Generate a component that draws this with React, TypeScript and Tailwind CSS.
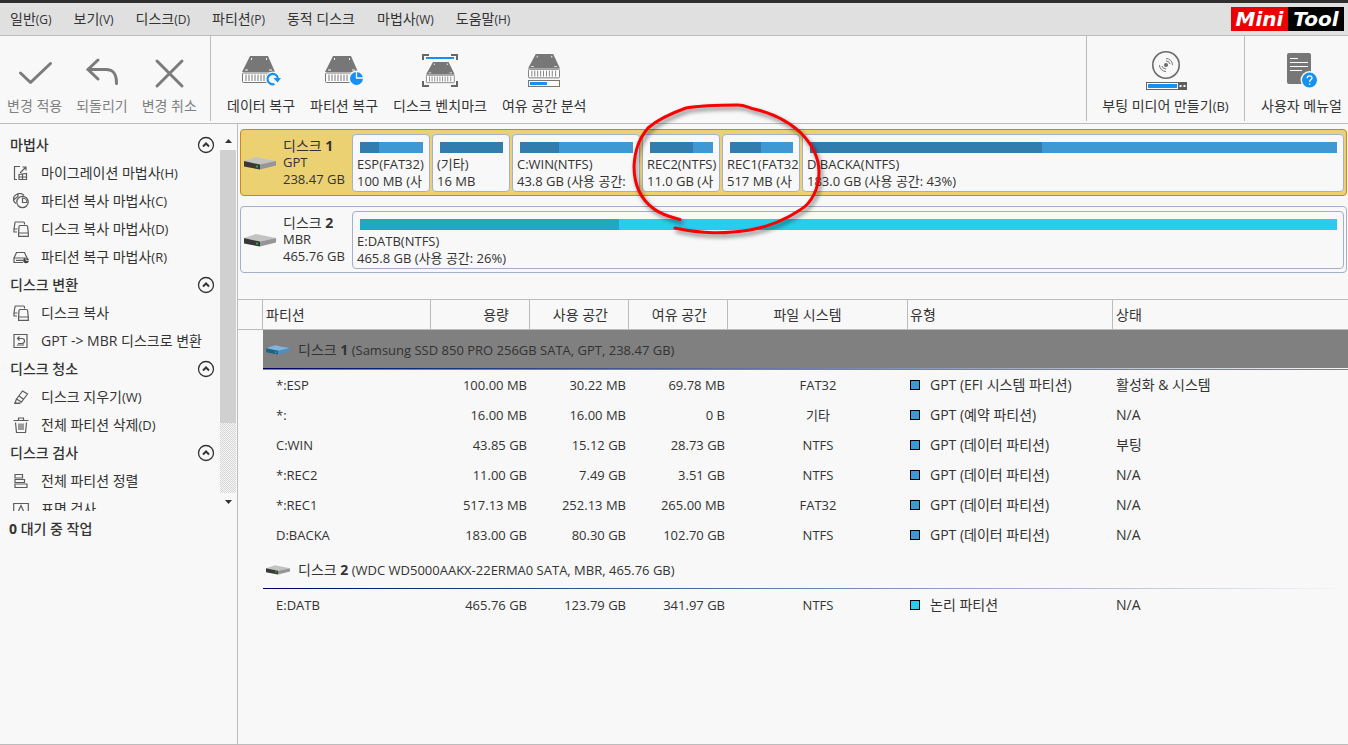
import { useState } from "react";
import type { ReactNode } from "react";

type Partition = {
    name: string;
    size: string;
    used: number;
    box: string;
};

type Row = {
    name: string;
    total: string;
    used: string;
    free: string;
    fs: string;
    kind: string;
    state: string;
};

const menuItems = [
    { name: "일반", hotkey: "(G)" },
    { name: "보기", hotkey: "(V)" },
    { name: "디스크", hotkey: "(D)" },
    { name: "파티션", hotkey: "(P)" },
    { name: "동적 디스크", hotkey: "" },
    { name: "마법사", hotkey: "(W)" },
    { name: "도움말", hotkey: "(H)" },
];

const disk1Parts: Partition[] = [
    { name: "ESP(FAT32)", size: "100 MB (사", used: 30, box: "w-[78px] shrink-0" },
    { name: "(기타)", size: "16 MB", used: 100, box: "w-[78px] shrink-0" },
    { name: "C:WIN(NTFS)", size: "43.8 GB (사용 공간:", used: 34.5, box: "w-32 shrink-0" },
    { name: "REC2(NTFS)", size: "11.0 GB (사", used: 68, box: "w-[78px] shrink-0" },
    { name: "REC1(FAT32", size: "517 MB (사", used: 49, box: "w-[78px] shrink-0" },
    { name: "D:BACKA(NTFS)", size: "183.0 GB (사용 공간: 43%)", used: 44, box: "min-w-0 flex-1" },
];

const disk2Parts: Partition[] = [
    { name: "E:DATB(NTFS)", size: "465.8 GB (사용 공간: 26%)", used: 26.5, box: "min-w-0 flex-1" },
];

const disk1Rows: Row[] = [
    { name: "*:ESP", total: "100.00 MB", used: "30.22 MB", free: "69.78 MB", fs: "FAT32", kind: "GPT (EFI 시스템 파티션)", state: "활성화 & 시스템" },
    { name: "*:", total: "16.00 MB", used: "16.00 MB", free: "0 B", fs: "기타", kind: "GPT (예약 파티션)", state: "N/A" },
    { name: "C:WIN", total: "43.85 GB", used: "15.12 GB", free: "28.73 GB", fs: "NTFS", kind: "GPT (데이터 파티션)", state: "부팅" },
    { name: "*:REC2", total: "11.00 GB", used: "7.49 GB", free: "3.51 GB", fs: "NTFS", kind: "GPT (데이터 파티션)", state: "N/A" },
    { name: "*:REC1", total: "517.13 MB", used: "252.13 MB", free: "265.00 MB", fs: "FAT32", kind: "GPT (데이터 파티션)", state: "N/A" },
    { name: "D:BACKA", total: "183.00 GB", used: "80.30 GB", free: "102.70 GB", fs: "NTFS", kind: "GPT (데이터 파티션)", state: "N/A" },
];

const disk2Rows: Row[] = [
    { name: "E:DATB", total: "465.76 GB", used: "123.79 GB", free: "341.97 GB", fs: "NTFS", kind: "논리 파티션", state: "N/A" },
];

/* ---------- toolbar icons ---------- */

function DriveFront() {
    return (
        <g>
            <path d="M8 0H26L33 16H0Z" fill="#777" />
            <path d="M9 2h1v2H9zM24 2h1v2h-1zM3 13.5h3v1H3zM27 13.5h3v1h-3z" fill="#f8f8f8" />
            <rect x="0.5" y="17" width="32" height="9.5" rx="1" fill="#fff" stroke="#777" />
            <path
                d="M4 18.5v6.5M7 18.5v6.5M10 18.5v6.5M13 18.5v6.5M16 18.5v6.5M19 18.5v6.5M22 18.5v6.5M25 18.5v6.5M28.5 18.5v6.5"
                stroke="#777"
                strokeWidth="1"
            />
        </g>
    );
}

function ApplyIcon() {
    return (
        <svg width="40" height="40" viewBox="0 0 40 40" fill="none" stroke="#7b7b7b" strokeWidth="3" strokeLinecap="round" strokeLinejoin="round">
            <path d="M5.5 23 15.5 32.5 35.5 13.5" />
        </svg>
    );
}

function UndoIcon() {
    return (
        <svg width="40" height="40" viewBox="0 0 40 40" fill="none" stroke="#7b7b7b" strokeWidth="3" strokeLinecap="round">
            <path d="M16 10 6 19.5 16 29M6 19.5H24C31.5 19.5 34.5 24 34.5 33.5" />
        </svg>
    );
}

function DiscardIcon() {
    return (
        <svg width="40" height="40" viewBox="0 0 40 40" fill="none" stroke="#7b7b7b" strokeWidth="3" strokeLinecap="round">
            <path d="M8 11 33 36M33 11 8 36" />
        </svg>
    );
}

function DataRecoveryIcon() {
    return (
        <svg width="40" height="40" viewBox="0 0 40 40" fill="none">
            <g transform="translate(1 6)">
                <DriveFront />
            </g>
            <circle cx="32" cy="29" r="7.5" fill="#f8f8f8" />
            <path d="M33.5 34A5.2 5.2 0 1 1 36.8 28" stroke="#1590f5" strokeWidth="2.2" />
            <path d="M32.5 28H40L36.5 32.5Z" fill="#1590f5" />
        </svg>
    );
}

function PartitionRecoveryIcon() {
    return (
        <svg width="40" height="40" viewBox="0 0 40 40" fill="none">
            <g transform="translate(1 6)">
                <DriveFront />
            </g>
            <circle cx="32.5" cy="28.5" r="8" fill="#f8f8f8" />
            <circle cx="32.5" cy="28.5" r="6.5" fill="#1590f5" />
            <path d="M32.5 21.5V28H39.5" stroke="#f8f8f8" strokeWidth="1.3" />
        </svg>
    );
}

function BenchmarkIcon() {
    return (
        <svg width="40" height="40" viewBox="0 0 40 40" fill="none">
            <path d="M3 10V5H9M31 5H37V10M3 31V36H9M31 36H37V31" stroke="#666" strokeWidth="2" />
            <path d="M6 8H34" stroke="#1590f5" strokeWidth="2" />
            <g transform="translate(6 12) scale(.87 .78)">
                <DriveFront />
            </g>
        </svg>
    );
}

function SpaceIcon() {
    return (
        <svg width="40" height="40" viewBox="0 0 40 40" fill="none">
            <g transform="translate(4 4) scale(.97 .9)">
                <DriveFront />
            </g>
            <rect x="4.5" y="30.5" width="31" height="6" fill="#fff" stroke="#777" />
            <rect x="6" y="32" width="17" height="3" fill="#1590f5" />
        </svg>
    );
}

function BootMediaIcon() {
    return (
        <svg width="42" height="40" viewBox="0 0 42 40" fill="none">
            <circle cx="21" cy="15" r="13.2" stroke="#6a6a6a" strokeWidth="1.6" />
            <circle cx="21" cy="15" r="2" fill="#6a6a6a" />
            <path d="M21 8.5A6.5 6.5 0 0 1 27.5 15M21 21.5A6.5 6.5 0 0 1 14.5 15M21 11A4 4 0 0 1 25 14M21 19A4 4 0 0 1 17 16" stroke="#777" />
            <rect x="1.5" y="32.5" width="32" height="7" fill="#fff" stroke="#666" />
            <rect x="3" y="34" width="29" height="4" fill="#1590f5" />
            <rect x="33" y="32" width="9" height="8" fill="#5d5d5d" />
            <path d="M34.5 35h2v2h-2zM38.5 35h2v2h-2z" fill="#fff" />
        </svg>
    );
}

function ManualIcon() {
    return (
        <svg width="40" height="40" viewBox="0 0 40 40" fill="none">
            <rect x="5" y="3" width="24" height="31" rx="2" fill="#777" />
            <path d="M8 8.5H16M8 12.5H26M8 16.5H26M8 20.5H20" stroke="#fff" />
            <circle cx="27.5" cy="30" r="9" fill="#f8f8f8" />
            <circle cx="27.5" cy="30" r="7.5" fill="#1590f5" />
            <path d="M25.2 28.300C25.200 25 30 25 30 28C30 29.800 27.600 29.800 27.600 32M27.600 33.400V34.700" stroke="#fff" strokeWidth="1.3" />
        </svg>
    );
}

/* ---------- sidebar icons ---------- */

function SmallIcon({ children }: { children: ReactNode }) {
    return (
        <svg className="shrink-0" width="16" height="16" viewBox="0 0 16 16" fill="none" stroke="#5c5c5c" strokeWidth="1.2">
            {children}
        </svg>
    );
}

function MigrateIcon() {
    return (
        <SmallIcon>
            <path d="M7 1.5H1.500V14.500H4M7 8 12.500 2.500M9.500 2H13V5.500" />
            <path d="M6 9.5 9.500 9V14.500H6ZM9.500 9 13.500 8.500V14.500H9.500M6 12H13.500" />
        </SmallIcon>
    );
}

function CopyPartitionIcon() {
    return (
        <SmallIcon>
            <path d="M3 10.5A5 5 0 0 1 3.500 1.500Q8 -1 11 2.500M1 6.500 5 3.500V1" />
            <circle cx="9.5" cy="9" r="5.7" />
            <path d="M9.5 5V9.500H14A4.500 4.500 0 0 0 9.500 5Z" />
        </SmallIcon>
    );
}

function CopyDiskIcon() {
    return (
        <SmallIcon>
            <path d="M4 11H1V8L2 1.500Q2 1 2.500 1H10.500Q11.500 1 11.500 2V3.500M1 8H4.500" />
            <path d="M7 4.500H13.500Q14.500 4.500 14.600 5.500L15.300 12V15.300H5.600V12L6 5.500Q6 4.500 7 4.500ZM5.600 12H15.300" />
        </SmallIcon>
    );
}

function RecoverPartitionIcon() {
    return (
        <SmallIcon>
            <path d="M3.5 3.500H11.500L14 9H1ZM1 9V13.500H10M3 11.300H10" />
            <circle cx="13" cy="11.5" r="2.8" fill="#444" stroke="none" />
            <path d="M13 11.5V8.500M13 11.500H16" stroke="#f8f8f8" strokeWidth=".7" />
        </SmallIcon>
    );
}

function ConvertIcon() {
    return (
        <SmallIcon>
            <path d="M1 1.5H14V14.500H1Z" />
            <path d="M4.5 5.500H9A2.500 2.500 0 0 1 9 10.500H5M6.500 3.500 4.500 5.500 6.500 7.500M4 12H11" />
        </SmallIcon>
    );
}

function EraseIcon() {
    return (
        <SmallIcon>
            <path d="M9.5 2 14.500 5 8.500 13 3.500 10ZM3.500 10 2 14H7L8.500 13M6 7 11 10.500M1 14.500H7" />
        </SmallIcon>
    );
}

function TrashIcon() {
    return (
        <SmallIcon>
            <path d="M.5 3.500H15.500M5.500 3V1H10.500V3M2.500 5.500 3.500 15.500H12.500L13.500 5.500M6 6.500V13M8 6.500V13M10 6.500V13" />
        </SmallIcon>
    );
}

function AlignIcon() {
    return (
        <SmallIcon>
            <path d="M2 1.5H9.500V5H2ZM2 6.500H11.500V9.500H2ZM2 11H14V14.500H2Z" />
        </SmallIcon>
    );
}

function SurfaceIcon() {
    return (
        <SmallIcon>
            <path d="M.7 2.500H15.300V13H.7ZM5.500 10 8 4.500 10.500 10" />
        </SmallIcon>
    );
}

const sections = [
    {
        title: "마법사",
        items: [
            { icon: <MigrateIcon />, name: "마이그레이션 마법사", hotkey: "(H)" },
            { icon: <CopyPartitionIcon />, name: "파티션 복사 마법사", hotkey: "(C)" },
            { icon: <CopyDiskIcon />, name: "디스크 복사 마법사", hotkey: "(D)" },
            { icon: <RecoverPartitionIcon />, name: "파티션 복구 마법사", hotkey: "(R)" },
        ],
    },
    {
        title: "디스크 변환",
        items: [
            { icon: <CopyDiskIcon />, name: "디스크 복사", hotkey: "" },
            { icon: <ConvertIcon />, name: "GPT -> MBR 디스크로 변환", hotkey: "" },
        ],
    },
    {
        title: "디스크 청소",
        items: [
            { icon: <EraseIcon />, name: "디스크 지우기", hotkey: "(W)" },
            { icon: <TrashIcon />, name: "전체 파티션 삭제", hotkey: "(D)" },
        ],
    },
    {
        title: "디스크 검사",
        items: [
            { icon: <AlignIcon />, name: "전체 파티션 정렬", hotkey: "" },
            { icon: <SurfaceIcon />, name: "표면 검사", hotkey: "" },
        ],
    },
];

function ToolButton({ icon, label, hotkey, muted }: { icon: ReactNode; label: string; hotkey?: string; muted?: boolean }) {
    return (
        <button type="button" className={muted ? "flex flex-col items-center text-[#808080]" : "flex flex-col items-center"}>
            {icon}
            <span className="mt-1.5 leading-5 whitespace-nowrap">
                {label}
                {hotkey && <span className="text-[13px]">{hotkey}</span>}
            </span>
        </button>
    );
}

function HardDisk({ small, tinted }: { small?: boolean; tinted?: boolean }) {
    return (
        <svg className="shrink-0" width={small ? 24 : 32} height={small ? 10 : 13} viewBox="0 0 32 13">
            <path d="M0 4 12 0 32 4 16 7.500Z" fill={tinted ? "#7fb4dd" : "#c3c3c3"} />
            <path d="M0 4 16 7.500V12.500L0 9.500Z" fill={tinted ? "#1f6288" : "#383838"} />
            <path d="M16 7.5 32 4V8.500L16 12.500Z" fill={tinted ? "#4f8fbd" : "#969696"} />
            <path d="M12 8.5h2v2h-2z" fill={tinted ? "#3fa0a0" : "#18b038"} />
        </svg>
    );
}

function DiskMap({ no, scheme, size, parts, selected }: { no: number; scheme: string; size: string; parts: Partition[]; selected?: boolean }) {
    return (
        <div
            className={
                selected
                    ? "flex rounded border border-[#c98a0c] bg-[#ecd172] pt-1 pr-0.5 pb-[3px]"
                    : "flex rounded border border-[#a3afcb] bg-[#f8f8f8] pt-1 pr-0.5 pb-[3px]"
            }
        >
            <div className="flex w-[111px] shrink-0 items-center gap-[7px] pl-[3px] text-[13px]">
                <HardDisk />
                <div className="pb-0.5 leading-[17px] whitespace-nowrap">
                    <p className="text-sm leading-[17px]">
                        디스크 <b>{no}</b>
                    </p>
                    <p>{scheme}</p>
                    <p>{size}</p>
                </div>
            </div>
            <div className="flex min-w-0 flex-1 gap-0.5">
                {parts.map((p) => (
                    <div key={p.name} className={`${p.box} h-[58px] rounded border border-[#a3afcb] bg-[#f8f8f8] pt-[7px]`}>
                        <div className={selected ? "mr-1.5 ml-[7px] h-[11px] bg-[#3e98d3]" : "mr-1.5 ml-[7px] h-[11px] bg-[#29ccec]"}>
                            <div className={selected ? "h-full bg-[#337dae]" : "h-full bg-[#20a8bf]"} style={{ width: `${p.used}%` }} />
                        </div>
                        <div className="mt-[3px] ml-1 text-[13px] leading-[17px] whitespace-nowrap">
                            <p>{p.name}</p>
                            <p>{p.size}</p>
                        </div>
                    </div>
                ))}
            </div>
        </div>
    );
}

function GroupRow({ no, detail, selected }: { no: number; detail: string; selected?: boolean }) {
    return (
        <tr className="h-10">
            <td />
            <td colSpan={7} className="p-0">
                <div className={selected ? "flex h-10 flex-col border-b border-[#808080] bg-[#808080]" : "flex h-10 flex-col border-b border-transparent"}>
                    <div className="flex flex-1 items-center gap-2 pt-0.5 pl-[3px]">
                        <HardDisk small tinted={selected} />
                        <span className="text-[13px] whitespace-nowrap">
                            <span className="text-sm">
                                디스크 <b>{no}</b>
                            </span>{" "}
                            {detail}
                        </span>
                    </div>
                    <div className="h-px bg-linear-to-r from-[#000060] to-[#f8f8f8]" />
                </div>
            </td>
        </tr>
    );
}

function PartitionRow({ row, teal }: { row: Row; teal?: boolean }) {
    return (
        <tr className="h-[30px]">
            <td />
            <td className="pl-[13px]">{row.name}</td>
            <td className="pr-[3px] text-right">{row.total}</td>
            <td className="pr-[3px] text-right">{row.used}</td>
            <td className="pr-[3px] text-right">{row.free}</td>
            <td className="text-center">{row.fs}</td>
            <td className="pl-0.5 text-sm">
                <span className="flex items-center gap-2.5">
                    <span className={teal ? "size-2.5 border border-black bg-[#29ccec]" : "size-2.5 border border-black bg-[#3e98d3]"} />
                    {row.kind}
                </span>
            </td>
            <td className="pl-[3px] text-sm">{row.state}</td>
        </tr>
    );
}

function Sidebar() {
    const [closed, setClosed] = useState<string[]>([]);

    const toggle = (title: string) => {
        setClosed(closed.includes(title) ? closed.filter((t) => t !== title) : [...closed, title]);
    };

    return (
        <aside className="w-[238px] shrink-0 border-r border-[#bcbcbc] pt-[7px] pr-px">
            <div className="flex h-[380px]">
                <nav className="min-w-0 flex-1 overflow-hidden">
                    {sections.map((s) => (
                        <div key={s.title}>
                            <div className="flex h-7 items-center justify-between pr-[5px] pl-2.5">
                                <h2 className="font-medium">{s.title}</h2>
                                <button type="button" aria-label={s.title} onClick={() => toggle(s.title)}>
                                    <svg width="18" height="18" viewBox="0 0 18 18" fill="none" stroke="#333">
                                        <circle cx="9" cy="9" r="7.5" strokeWidth="1.3" />
                                        <path d="M6 10.5 9 7.500 12 10.500" strokeWidth="2" />
                                    </svg>
                                </button>
                            </div>
                            {!closed.includes(s.title) &&
                                s.items.map((item) => (
                                    <a key={item.name} href="#" className="flex h-7 items-center gap-3 pl-[13px] whitespace-nowrap">
                                        {item.icon}
                                        <span>
                                            {item.name}
                                            {item.hotkey && <span className="text-[13px]">{item.hotkey}</span>}
                                        </span>
                                    </a>
                                ))}
                        </div>
                    ))}
                </nav>
                {/* 스크롤바 */}
                <div className="flex w-4 flex-col">
                    <button type="button" aria-label="위로" className="flex h-[19px] items-center justify-center">
                        <svg width="7" height="4" viewBox="0 0 7 4">
                            <path d="M3.5 0 7 4H0Z" fill="#333" />
                        </svg>
                    </button>
                    <div className="h-[273px] bg-[#d0d0d0]" />
                    <div className="flex-1 bg-[repeating-conic-gradient(#d4d4d4_0_25%,#f8f8f8_0_50%)] bg-size-[2px_2px]" />
                    <button type="button" aria-label="아래로" className="flex h-[18px] items-center justify-center">
                        <svg width="7" height="4" viewBox="0 0 7 4">
                            <path d="M0 0H7L3.5 4Z" fill="#333" />
                        </svg>
                    </button>
                </div>
            </div>
            <p className="pt-2 pl-[9px] leading-5 font-medium">
                <b>0</b> 대기 중 작업
            </p>
        </aside>
    );
}

// 빨간색 손그림 표시
function Marker() {
    return (
        <svg className="pointer-events-none absolute top-24 left-[624px]" width="210" height="150" viewBox="624 96 210 150" fill="none">
            <path
                d="M680 219.500C671 217 662 215 654 209C643 201 634 188 634 166C635 151 638 140 648 128C656 121 672 113 686 108C703 105 722 105 738 105C744 105 747 107 752 108.500C773 113 789 122 800 132C813 145 819 158 819 172C819 188 812 203 800 210C785 220 767 227 750 230C724 234 703 234 675 228"
                stroke="#fa0000"
                strokeWidth="3"
                strokeLinecap="round"
                className="drop-shadow-[2px_3px_2px_rgba(0,0,0,0.5)]"
            />
        </svg>
    );
}

export default function App() {
    return (
        <div className="relative flex min-h-screen flex-col border-b border-[#bcbcbc] bg-[#f8f8f8] font-['Open_Sans','Noto_Sans_CJK_KR',sans-serif] text-sm text-[#333]">
            <header className="flex h-9 items-center justify-between border-t-3 border-b border-t-[#2f2f2f] border-b-[#bcbcbc] bg-[#e0e0e0] pr-1 pl-2.5">
                <nav className="flex gap-[22px]">
                    {menuItems.map((item) => (
                        <button key={item.name} type="button" className="whitespace-nowrap">
                            {item.name}
                            <span className="text-xs">{item.hotkey}</span>
                        </button>
                    ))}
                </nav>
                <div className="flex h-6 font-['DejaVu_Sans',sans-serif] text-xl leading-6 font-bold text-white italic">
                    <span className="w-[57px] bg-[#ec0000] text-center">Mini</span>
                    <span className="w-14 bg-black text-center">Tool</span>
                </div>
            </header>

            <div className="flex h-[88px] justify-between border-b border-[#bcbcbc]">
                <div className="flex">
                    <div className="mb-0.5 flex w-[211px] gap-3.5 border-r border-[#bcbcbc] pt-3.5 pl-[7px]">
                        <ToolButton icon={<ApplyIcon />} label="변경 적용" muted />
                        <ToolButton icon={<UndoIcon />} label="되돌리기" muted />
                        <ToolButton icon={<DiscardIcon />} label="변경 취소" muted />
                    </div>
                    <div className="flex gap-[15px] pt-3.5 pl-4">
                        <ToolButton icon={<DataRecoveryIcon />} label="데이터 복구" />
                        <ToolButton icon={<PartitionRecoveryIcon />} label="파티션 복구" />
                        <ToolButton icon={<BenchmarkIcon />} label="디스크 벤치마크" />
                        <ToolButton icon={<SpaceIcon />} label="여유 공간 분석" />
                    </div>
                </div>
                <div className="mb-0.5 flex">
                    <div className="flex w-[158px] justify-center border-l border-[#bcbcbc] pt-3.5">
                        <ToolButton icon={<BootMediaIcon />} label="부팅 미디어 만들기" hotkey="(B)" />
                    </div>
                    <div className="flex w-[104px] justify-end border-l border-[#bcbcbc] pt-3.5 pr-1.5">
                        <ToolButton icon={<ManualIcon />} label="사용자 메뉴얼" />
                    </div>
                </div>
            </div>

            <div className="flex flex-1">
                <Sidebar />
                <main className="min-w-0 flex-1">
                    <div className="flex flex-col gap-2.5 pt-[5px] pr-px pb-[26px] pl-0.5">
                        <DiskMap no={1} scheme="GPT" size="238.47 GB" parts={disk1Parts} selected />
                        <DiskMap no={2} scheme="MBR" size="465.76 GB" parts={disk2Parts} />
                    </div>

                    <table className="w-full table-fixed border-separate border-spacing-0 text-[13px] leading-5">
                        <colgroup>
                            <col className="w-[25px]" />
                            <col className="w-[168px]" />
                            <col className="w-[99px]" />
                            <col className="w-[99px]" />
                            <col className="w-[99px]" />
                            <col className="w-[180px]" />
                            <col className="w-[205px]" />
                            <col />
                        </colgroup>
                        <thead className="text-sm">
                            <tr className="h-[31px] *:border-y *:border-r *:border-[#bcbcbc] *:font-normal *:last:border-r-0">
                                <td />
                                <th className="pl-[3px] text-left">파티션</th>
                                <th className="pr-5 text-right">용량</th>
                                <th className="pr-5 text-right">사용 공간</th>
                                <th className="pr-5 text-right">여유 공간</th>
                                <th className="pr-5 text-center">파일 시스템</th>
                                <th className="pl-0.5 text-left">유형</th>
                                <th className="pl-[3px] text-left">상태</th>
                            </tr>
                        </thead>
                        <tbody>
                            <GroupRow no={1} detail="(Samsung SSD 850 PRO 256GB SATA, GPT, 238.47 GB)" selected />
                            {disk1Rows.map((row) => (
                                <PartitionRow key={row.name} row={row} />
                            ))}
                            <GroupRow no={2} detail="(WDC WD5000AAKX-22ERMA0 SATA, MBR, 465.76 GB)" />
                            {disk2Rows.map((row) => (
                                <PartitionRow key={row.name} row={row} teal />
                            ))}
                        </tbody>
                    </table>
                </main>
            </div>

            <Marker />
        </div>
    );
}
